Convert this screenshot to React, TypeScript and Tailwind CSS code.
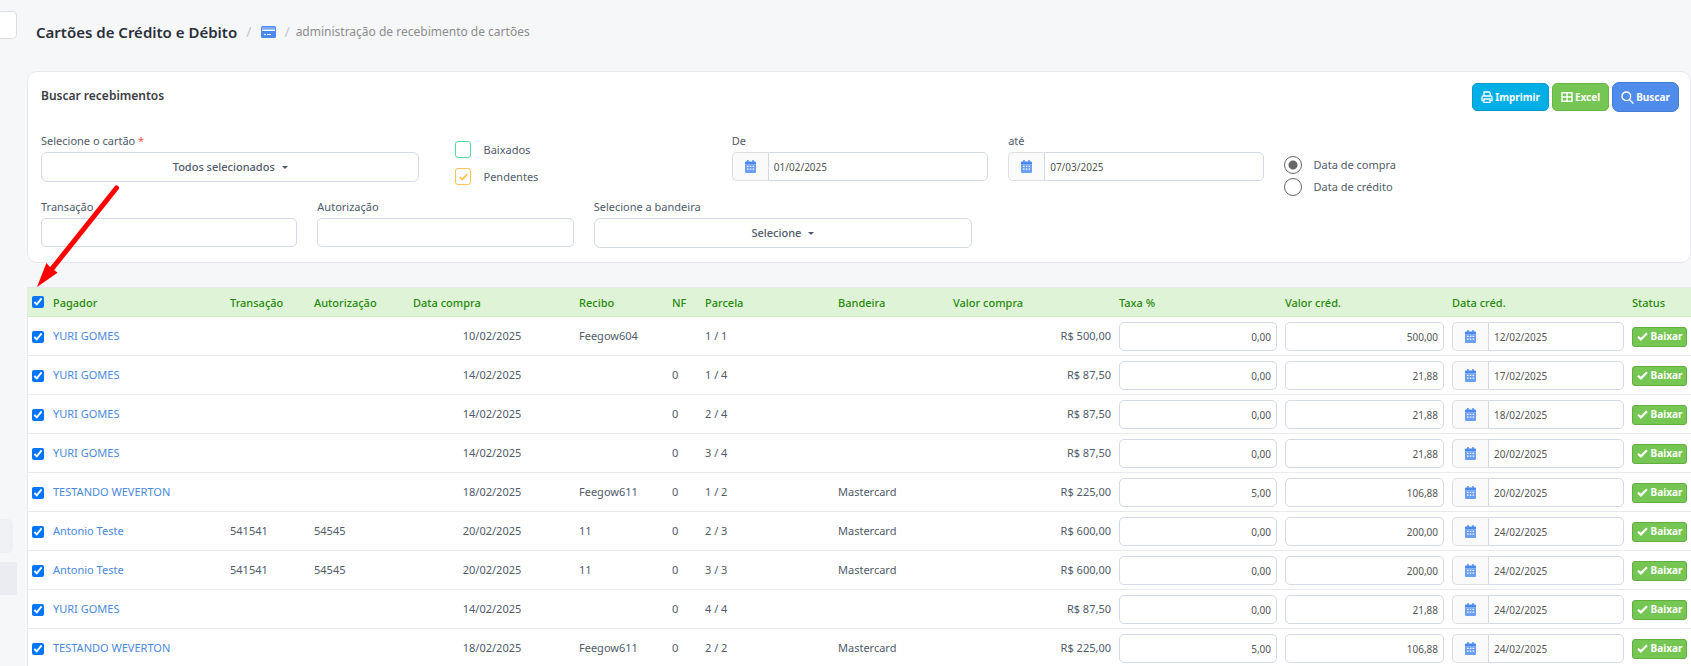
import type { ReactNode } from 'react';

type Recebimento = {
  pagador: string;
  transacao?: string;
  autorizacao?: string;
  dataCompra: string;
  recibo?: string;
  nf?: string;
  parcela: string;
  bandeira?: string;
  valorCompra: string;
  taxa: string;
  valorCred: string;
  dataCred: string;
};

const recebimentos: Recebimento[] = [
  { pagador: 'YURI GOMES', dataCompra: '10/02/2025', recibo: 'Feegow604', parcela: '1 / 1', valorCompra: 'R$ 500,00', taxa: '0,00', valorCred: '500,00', dataCred: '12/02/2025' },
  { pagador: 'YURI GOMES', dataCompra: '14/02/2025', nf: '0', parcela: '1 / 4', valorCompra: 'R$ 87,50', taxa: '0,00', valorCred: '21,88', dataCred: '17/02/2025' },
  { pagador: 'YURI GOMES', dataCompra: '14/02/2025', nf: '0', parcela: '2 / 4', valorCompra: 'R$ 87,50', taxa: '0,00', valorCred: '21,88', dataCred: '18/02/2025' },
  { pagador: 'YURI GOMES', dataCompra: '14/02/2025', nf: '0', parcela: '3 / 4', valorCompra: 'R$ 87,50', taxa: '0,00', valorCred: '21,88', dataCred: '20/02/2025' },
  { pagador: 'TESTANDO WEVERTON', dataCompra: '18/02/2025', recibo: 'Feegow611', nf: '0', parcela: '1 / 2', bandeira: 'Mastercard', valorCompra: 'R$ 225,00', taxa: '5,00', valorCred: '106,88', dataCred: '20/02/2025' },
  { pagador: 'Antonio Teste', transacao: '541541', autorizacao: '54545', dataCompra: '20/02/2025', recibo: '11', nf: '0', parcela: '2 / 3', bandeira: 'Mastercard', valorCompra: 'R$ 600,00', taxa: '0,00', valorCred: '200,00', dataCred: '24/02/2025' },
  { pagador: 'Antonio Teste', transacao: '541541', autorizacao: '54545', dataCompra: '20/02/2025', recibo: '11', nf: '0', parcela: '3 / 3', bandeira: 'Mastercard', valorCompra: 'R$ 600,00', taxa: '0,00', valorCred: '200,00', dataCred: '24/02/2025' },
  { pagador: 'YURI GOMES', dataCompra: '14/02/2025', nf: '0', parcela: '4 / 4', valorCompra: 'R$ 87,50', taxa: '0,00', valorCred: '21,88', dataCred: '24/02/2025' },
  { pagador: 'TESTANDO WEVERTON', dataCompra: '18/02/2025', recibo: 'Feegow611', nf: '0', parcela: '2 / 2', bandeira: 'Mastercard', valorCompra: 'R$ 225,00', taxa: '5,00', valorCred: '106,88', dataCred: '24/02/2025' },
];

const columns = [
  { label: 'Pagador', width: 'w-[177px]' },
  { label: 'Transação', width: 'w-[84px]' },
  { label: 'Autorização', width: 'w-[99px]' },
  { label: 'Data compra', width: 'w-[166px]' },
  { label: 'Recibo', width: 'w-[93px]' },
  { label: 'NF', width: 'w-[33px]' },
  { label: 'Parcela', width: 'w-[133px]' },
  { label: 'Bandeira', width: 'w-[115px]' },
  { label: 'Valor compra', width: 'w-[166px]' },
  { label: 'Taxa %', width: 'w-[166px]' },
  { label: 'Valor créd.', width: 'w-[167px]' },
  { label: 'Data créd.', width: 'w-[180px]' },
  { label: 'Status', width: 'w-[63px]' },
];

const field = 'h-[29px] w-full rounded-[5px] border border-[#d3d9e6] bg-white px-[5px] text-[10px] text-[#555]';

function CalendarIcon() {
  return (
    <svg viewBox="0 0 11 13" className="h-[13px] w-[11px]" aria-hidden="true">
      <path fill="#4a89ee" d="M2.300 0h1.400v1.600h3.600V0h1.400v1.600H10a1 1 0 0 1 1 1v1.600H0V2.600a1 1 0 0 1 1-1h1.300z" />
      <path fill="#6b9ff2" d="M0 4.200h11V12a1 1 0 0 1-1 1H1a1 1 0 0 1-1-1z" />
      <path fill="#fff" d="M2 5.800h1.500V7H2zm2.800 0h1.500V7H4.800zm2.800 0h1.500V7H7.600zM2 8.500h1.500v1.300H2zm2.800 0h1.500v1.300H4.800zm2.800 0h1.500v1.300H7.600z" />
    </svg>
  );
}

function CheckIcon({ className }: { className: string }) {
  return (
    <svg viewBox="0 0 12 10" className={className} fill="none" stroke="currentColor" strokeWidth="2.4" aria-hidden="true">
      <path d="M1 5.2 4.2 8.2 11 1.400" />
    </svg>
  );
}

function DateField({ id, label, value }: { id: string; label?: string; value: string }) {
  return (
    <div className="flex">
      <span className="flex w-9 shrink-0 items-center justify-center rounded-l-[5px] border border-r-0 border-[#dddfe3] bg-[#fafafa]">
        <CalendarIcon />
      </span>
      <input id={id} aria-label={label} defaultValue={value} className="h-[29px] w-full min-w-0 rounded-r-[5px] border border-[#d3d9e6] bg-white px-[5px] text-[10px] text-[#555]" />
    </div>
  );
}

function Field({ id, label, required, className, children }: { id: string; label: string; required?: boolean; className: string; children: ReactNode }) {
  return (
    <div className={className}>
      <label htmlFor={id} className="mb-[3px] block leading-4">
        {label} {required && <span className="text-[#f0584a]">*</span>}
      </label>
      {children}
    </div>
  );
}

function DropdownButton({ id, children }: { id: string; children: ReactNode }) {
  return (
    <button id={id} type="button" className="flex h-[30px] w-full items-center justify-center gap-[7px] rounded-[6px] border border-[#d3d9e6] bg-white text-[11px] font-medium">
      {children}
      <svg viewBox="0 0 6 3" className="h-[3px] w-[6px]" fill="currentColor" aria-hidden="true">
        <path d="M0 0h6L3 3z" />
      </svg>
    </button>
  );
}

export default function App() {
  return (
    <div className="relative flex h-screen overflow-hidden bg-[#f6f7f9] font-['Noto_Sans',sans-serif] text-[11px] text-[#4f5b6b]">
      <aside className="w-[27px] shrink-0">
        <div className="mt-[11px] h-7 w-[17px] rounded-r-[5px] border border-l-0 border-[#dcdde0] bg-white" />
        <div className="mt-[480px] h-[34px] w-[13px] rounded-r-[5px] bg-[#eff0f3]" />
        <div className="mt-[9px] h-[33px] w-[17px] bg-[#ebecf2]" />
      </aside>

      <div className="min-w-0 flex-1">
        <header className="flex h-[71px] items-start pl-[9px] pt-[22px] leading-5">
          <h1 className="text-[15px] font-semibold text-[#2b303b]">Cartões de Crédito e Débito</h1>
          <span className="ml-[9px] text-[14px] text-[#c4c7cc]">/</span>
          <svg viewBox="0 0 15 12" className="ml-[10px] mt-1 h-3 w-[15px]" aria-hidden="true">
            <rect width="15" height="12" rx="1.500" fill="#4a89ee" />
            <path fill="#7dabf4" d="M1 1h13v2H1z" />
            <path fill="#fff" d="M1 3.500h13V5H1zM3 8h2v1H3zm3 0h4v1H6z" />
          </svg>
          <span className="ml-2 text-[14px] text-[#c4c7cc]">/</span>
          <span className="ml-[6px] text-[12px] text-[#8d8d8d]">administração de recebimento de cartões</span>
        </header>

        <section className="rounded-[10px] border border-[#e6e8ee] bg-white pl-[13px] pr-[11px]">
          <div className="flex h-[61px] items-start justify-between">
            <h2 className="pt-[14px] text-[12px] font-semibold leading-5 text-[#3a3d44]">Buscar recebimentos</h2>
            <div className="flex items-center gap-[3px] pt-[10px] text-[10px] font-bold text-white">
              <button type="button" className="flex h-7 items-center gap-[2px] rounded-[5px] border border-[#0a99cb] bg-[#00aee6] px-2">
                <svg viewBox="0 0 12 12" className="size-3" fill="none" stroke="currentColor" strokeWidth="1.300" aria-hidden="true">
                  <path d="M3 5V1h5l1.300 1.300V5M3 9.500H1V6.300C1 5.500 1.500 5 2.200 5h7.600C10.500 5 11 5.500 11 6.300v3.200H9M3 8h6v3.300H3z" />
                </svg>
                Imprimir
              </button>
              <button type="button" className="flex h-7 items-center gap-[2px] rounded-[5px] border border-[#68b546] bg-[#76c653] px-2">
                <svg viewBox="0 0 12 12" className="size-3" fill="none" stroke="currentColor" strokeWidth="1.400" aria-hidden="true">
                  <path d="M1 1.700h10v8.600H1zM6 1.700v8.600M1 6h10" />
                </svg>
                Excel
              </button>
              <button type="button" className="flex h-[30px] items-center gap-[2px] rounded-[7px] border border-[#447bd3] bg-[#4f8cec] px-2">
                <svg viewBox="0 0 13 13" className="size-[13px]" fill="none" stroke="currentColor" strokeWidth="1.400" aria-hidden="true">
                  <circle cx="5.300" cy="5.300" r="4.300" />
                  <path d="m8.400 8.400 4 4" />
                </svg>
                Buscar
              </button>
            </div>
          </div>

          <div className="grid grid-cols-12 gap-x-5 gap-y-[14px] pb-[14px]">
            <Field id="cartao" label="Selecione o cartão" required className="col-span-3 pr-4">
              <DropdownButton id="cartao">Todos selecionados</DropdownButton>
            </Field>
            <div className="col-span-2 flex flex-col gap-[10px] pt-2">
              <label className="flex items-center gap-3 leading-[17px]">
                <input type="checkbox" className="h-[17px] w-4 appearance-none rounded-[3px] border border-[#52dc9c]" />
                Baixados
              </label>
              <label className="flex items-center gap-3 leading-[17px]">
                <span className="grid">
                  <input type="checkbox" defaultChecked className="col-start-1 row-start-1 h-[17px] w-4 appearance-none rounded-[3px] border border-[#fdc352]" />
                  <CheckIcon className="col-start-1 row-start-1 h-2 w-[9px] place-self-center text-[#fdc352]" />
                </span>
                Pendentes
              </label>
            </div>
            <Field id="de" label="De" className="col-span-2">
              <DateField id="de" value="01/02/2025" />
            </Field>
            <Field id="ate" label="até" className="col-span-2">
              <DateField id="ate" value="07/03/2025" />
            </Field>
            <div className="col-span-3 row-span-2 flex flex-col gap-1 pt-[23px]">
              <label className="flex items-center gap-[11px] leading-[18px]">
                <input type="radio" name="data" defaultChecked className="size-[18px] appearance-none rounded-full border border-[#666] bg-white checked:bg-[radial-gradient(#666_4px,white_5px)]" />
                Data de compra
              </label>
              <label className="flex items-center gap-[11px] leading-[18px]">
                <input type="radio" name="data" className="size-[18px] appearance-none rounded-full border border-[#666] bg-white checked:bg-[radial-gradient(#666_4px,white_5px)]" />
                Data de crédito
              </label>
            </div>

            <Field id="transacao" label="Transação" className="col-span-2">
              <input id="transacao" className={field} />
            </Field>
            <Field id="autorizacao" label="Autorização" className="col-span-2">
              <input id="autorizacao" className={field} />
            </Field>
            <Field id="bandeira" label="Selecione a bandeira" className="col-span-3 pr-4">
              <DropdownButton id="bandeira">Selecione</DropdownButton>
            </Field>
          </div>
        </section>

        <table className="mt-6 w-full table-fixed border-separate border-spacing-0 border-l border-t border-[#e6e8ee] bg-white">
          <thead>
            <tr className="h-[29px] bg-[#dff3d7] text-left text-[#278a0d]">
              <th className="w-[21px] border-b border-[#cdeac1] p-0 pl-1">
                <input type="checkbox" defaultChecked aria-label="Selecionar todos" className="block size-3 accent-[#0075ff]" />
              </th>
              {columns.map((column) => (
                <th key={column.label} className={`${column.width} border-b border-[#cdeac1] px-1 pt-[3px] pb-0 font-medium`}>
                  {column.label}
                </th>
              ))}
            </tr>
          </thead>
          <tbody className="[&_td]:border-b [&_td]:border-[#e9eaec] [&_td]:px-1 [&_td]:pt-[5px] [&_td]:pb-1">
            {recebimentos.map((item, index) => (
              <tr key={index}>
                <td>
                  <input type="checkbox" defaultChecked aria-label={`Selecionar ${item.pagador}`} className="block size-3 accent-[#0075ff]" />
                </td>
                <td>
                  <a href="#" className="text-[#4a89dc]">{item.pagador}</a>
                </td>
                <td>{item.transacao}</td>
                <td>{item.autorizacao}</td>
                <td className="text-center">{item.dataCompra}</td>
                <td>{item.recibo}</td>
                <td>{item.nf}</td>
                <td>{item.parcela}</td>
                <td>{item.bandeira}</td>
                <td className="text-right">{item.valorCompra}</td>
                <td>
                  <input aria-label="Taxa %" defaultValue={item.taxa} className={`${field} block text-right`} />
                </td>
                <td>
                  <input aria-label="Valor créd." defaultValue={item.valorCred} className={`${field} block text-right`} />
                </td>
                <td>
                  <DateField id={`cred-${index}`} label="Data créd." value={item.dataCred} />
                </td>
                <td>
                  <button type="button" className="flex h-5 w-full items-center justify-center gap-[3px] rounded-[3px] border border-[#62ae41] bg-[#76c653] text-[10px] font-bold text-white">
                    <CheckIcon className="h-[9px] w-[11px]" />
                    Baixar
                  </button>
                </td>
              </tr>
            ))}
          </tbody>
        </table>
      </div>

      {/* arrow pointing at the select-all box */}
      <svg viewBox="0 0 90 110" className="pointer-events-none absolute left-[35px] top-[180px] h-[110px] w-[90px]" aria-hidden="true">
        <path d="M81.500 8 16 90" stroke="#f00" strokeWidth="5" strokeLinecap="round" />
        <path d="M2 107 11.400 83l4 4.500 2.500 1.500 4.600 3.700z" fill="#f00" />
      </svg>
    </div>
  );
}
